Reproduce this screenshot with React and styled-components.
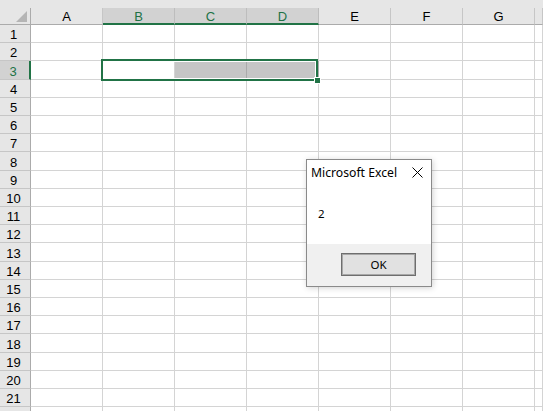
import React from "react";
import styled, { createGlobalStyle } from "styled-components";

const GREEN = "#217346";
const GRID = "#d4d4d4";

const Global = createGlobalStyle`
  html, body { margin: 0; padding: 0; background: #fff; overflow: hidden; }
  body { width: 543px; height: 411px; }
`;

const Page = styled.div`
  position: relative;
  width: 543px;
  height: 411px;
  overflow: hidden;
  background: #fff;
`;

const TopBand = styled.div`
  height: 8px;
  background: #e6e6e6;
`;

const Sheet = styled.div`
  position: relative;
  display: grid;
  grid-template-columns: 31px repeat(7, 72px) 8px;
  width: max-content;
`;

const HeaderCell = styled.div`
  box-sizing: border-box;
  height: 17px;
  display: flex;
  align-items: flex-end;
  justify-content: center;
  font-family: "Liberation Sans", Arial, sans-serif;
  font-size: 13px;
  line-height: 13px;
  padding-bottom: ${(p) => (p.$sel ? 0 : 1)}px;
  color: ${(p) => (p.$sel ? GREEN : "#000")};
  background: ${(p) => (p.$sel ? "#d2d2d2" : "#e6e6e6")};
  border-right: 1px solid ${(p) => (p.$sel ? "#bdbdbd" : "#c6c6c6")};
  border-bottom: ${(p) => (p.$sel ? `2px solid ${GREEN}` : "1px solid #ababab")};
`;

const Corner = styled.div`
  box-sizing: border-box;
  height: 17px;
  background: #e6e6e6;
  border-right: 1px solid #ababab;
  border-bottom: 1px solid #ababab;
  display: flex;
  align-items: flex-end;
  justify-content: flex-end;
  padding: 0 3px 2px 0;
`;

const RowHead = styled.div`
  box-sizing: border-box;
  height: ${(p) => p.$h}px;
  display: flex;
  align-items: flex-end;
  justify-content: center;
  padding-right: 3px;
  font-family: "Liberation Sans", Arial, sans-serif;
  font-size: 13px;
  line-height: 13px;
  padding-bottom: 1px;
  color: ${(p) => (p.$sel ? GREEN : "#000")};
  background: ${(p) => (p.$sel ? "#d2d2d2" : "#e6e6e6")};
  border-right: ${(p) => (p.$sel ? `2px solid ${GREEN}` : "1px solid #ababab")};
  border-bottom: 1px solid #c6c6c6;
`;

const Cell = styled.div`
  box-sizing: border-box;
  height: ${(p) => p.$h}px;
  background: ${(p) => (p.$fill ? "#c6c6c6" : "#fff")};
  border-right: 1px solid ${(p) => (p.$fill ? "#ababab" : GRID)};
  border-bottom: 1px solid ${GRID};
`;

const Selection = styled.div`
  position: absolute;
  left: 101px;
  top: 51px;
  width: 217px;
  height: 22px;
  box-sizing: border-box;
  border: 2px solid ${GREEN};
  box-shadow: inset 0 0 0 1px #fff;
  pointer-events: none;
`;

const FillHandle = styled.div`
  position: absolute;
  right: -5px;
  bottom: -5px;
  width: 5px;
  height: 5px;
  background: ${GREEN};
  border: 1px solid #fff;
`;

const Dialog = styled.div`
  position: absolute;
  left: 306px;
  top: 159px;
  width: 126px;
  height: 128px;
  box-sizing: border-box;
  border: 1px solid #8a8a8a;
  background: #fff;
  box-shadow: 1px 1px 6px rgba(0, 0, 0, 0.18);
  display: flex;
  flex-direction: column;
  font-family: "Noto Sans", "Segoe UI", sans-serif;
`;

const TitleBar = styled.div`
  height: 25px;
  display: flex;
  align-items: center;
  justify-content: space-between;
  padding: 0 8px 0 4px;
  font-size: 12.2px;
  color: #000;
`;

const Body = styled.div`
  flex: 1;
  padding: 21px 0 0 11px;
  font-size: 11.5px;
  color: #000;
`;

const Footer = styled.div`
  height: 42px;
  background: #f0f0f0;
  display: flex;
  align-items: flex-start;
  justify-content: flex-end;
  padding: 9px 15px 0 0;
  box-sizing: border-box;
`;

const OkButton = styled.button`
  width: 75px;
  height: 23px;
  box-sizing: border-box;
  border: 1px solid #6e6e6e;
  box-shadow: inset 0 0 0 1px #a8a8a8;
  background: #e1e1e1;
  font-family: "Noto Sans", "Segoe UI", sans-serif;
  font-size: 11.5px;
  color: #000;
  padding: 0;
  line-height: 21px;
`;

const cols = ["A", "B", "C", "D", "E", "F", "G", ""];
const selCols = new Set(["B", "C", "D"]);

const rowHeights = [];
for (let i = 1; i <= 22; i++) {
  const b = Math.round(24 + 18.2 * i);
  const a = Math.round(24 + 18.2 * (i - 1));
  rowHeights.push(b - a);
}

export default function App() {
  return (
    <Page>
      <Global />
      <TopBand />
      <Sheet>
        <Corner>
          <svg width="11" height="11" viewBox="0 0 11 11">
            <polygon points="11,0 11,11 0,11" fill="#b5b5b5" />
          </svg>
        </Corner>
        {cols.map((c, i) => (
          <HeaderCell key={i} $sel={selCols.has(c)}>
            {c}
          </HeaderCell>
        ))}
        {rowHeights.map((h, i) => {
          const r = i + 1;
          return (
            <React.Fragment key={r}>
              <RowHead $h={h} $sel={r === 3}>
                {r}
              </RowHead>
              {cols.map((c, j) => (
                <Cell key={j} $h={h} $fill={r === 3 && (c === "C" || c === "D")} />
              ))}
            </React.Fragment>
          );
        })}
        <Selection>
          <FillHandle />
        </Selection>
      </Sheet>
      <Dialog>
        <TitleBar>
          <span>Microsoft Excel</span>
          <svg width="11" height="11" viewBox="0 0 11 11">
            <path d="M0.5 0.5 L10.5 10.5 M10.5 0.5 L0.5 10.5" stroke="#000" strokeWidth="1" />
          </svg>
        </TitleBar>
        <Body>2</Body>
        <Footer>
          <OkButton>OK</OkButton>
        </Footer>
      </Dialog>
    </Page>
  );
}
